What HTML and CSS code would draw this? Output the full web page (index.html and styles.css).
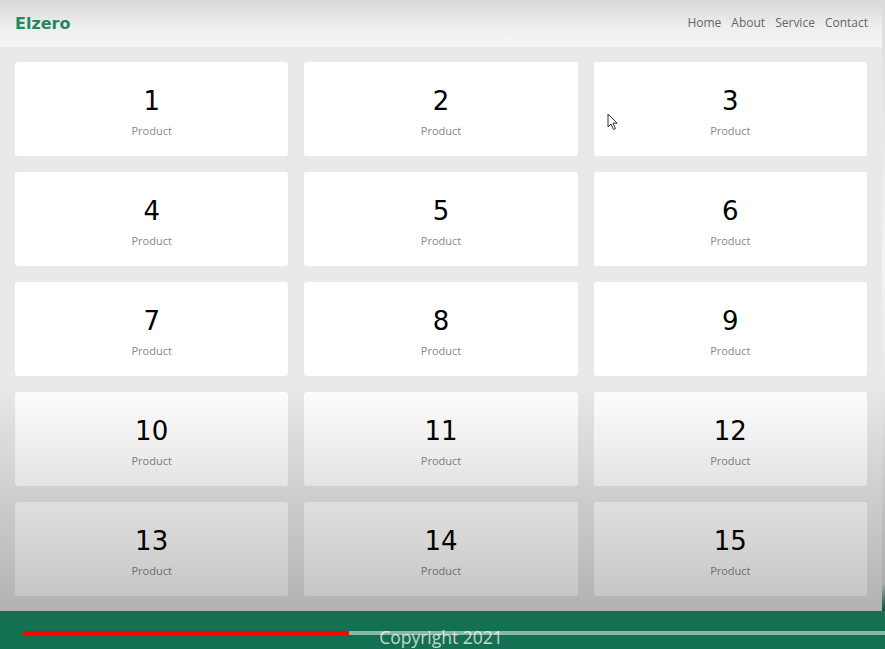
FILE: index.html
```html
<!DOCTYPE html>
<html lang="en">
<head>
<meta charset="utf-8">
<title>Elzero</title>
<link rel="stylesheet" href="styles.css">
</head>
<body>
<div class="frame">
  <div class="page">
    <header class="header">
      <div class="logo">Elzero</div>
      <nav class="nav">
        <a href="#">Home</a>
        <a href="#">About</a>
        <a href="#">Service</a>
        <a href="#">Contact</a>
      </nav>
    </header>
    <main class="products">
      <div class="card"><span class="num">1</span><span class="label">Product</span></div>
      <div class="card"><span class="num">2</span><span class="label">Product</span></div>
      <div class="card"><span class="num">3</span><span class="label">Product</span></div>
      <div class="card"><span class="num">4</span><span class="label">Product</span></div>
      <div class="card"><span class="num">5</span><span class="label">Product</span></div>
      <div class="card"><span class="num">6</span><span class="label">Product</span></div>
      <div class="card"><span class="num">7</span><span class="label">Product</span></div>
      <div class="card"><span class="num">8</span><span class="label">Product</span></div>
      <div class="card"><span class="num">9</span><span class="label">Product</span></div>
      <div class="card"><span class="num">10</span><span class="label">Product</span></div>
      <div class="card"><span class="num">11</span><span class="label">Product</span></div>
      <div class="card"><span class="num">12</span><span class="label">Product</span></div>
      <div class="card"><span class="num">13</span><span class="label">Product</span></div>
      <div class="card"><span class="num">14</span><span class="label">Product</span></div>
      <div class="card"><span class="num">15</span><span class="label">Product</span></div>
    </main>
    <footer class="footer">Copyright 2021</footer>
  </div>
  <div class="edge"></div>

  <div class="shade"></div>
  <div class="progress"><div class="played"></div></div>
  <svg class="cursor" width="12" height="18" viewBox="0 0 12 18">
    <path d="M1 1 L1 14 L4 11 L6.5 16.5 L8.5 15.5 L6 10.2 L10.2 10.2 Z" fill="#fff" stroke="#333" stroke-width="1" stroke-linejoin="round"/>
  </svg>
</div>
</body>
</html>
```

FILE: styles.css
```css
* { box-sizing: border-box; }
html, body { margin: 0; padding: 0; }
body {
  width: 885px;
  height: 649px;
  overflow: hidden;
  background: #f2f2f2;
  font-family: "Open Sans", "Liberation Sans", sans-serif;
}
.frame {
  position: relative;
  display: flex;
  width: 885px;
  height: 649px;
  overflow: hidden;
}
.page {
  width: 882px;
  display: flex;
  flex-direction: column;
  background: #e9e9e9;
}
.edge {
  width: 3px;
  background: linear-gradient(#dcdcdc, #f4f4f4 40%, #d8d8d8 90%, #146f52 94%);
}
.header {
  height: 47px;
  flex: none;
  display: flex;
  align-items: center;
  justify-content: space-between;
  padding: 0 14px 0 15px;
  background: linear-gradient(#d7d7d7, #eeeeee 55%, #f6f6f6);
}
.logo {
  font-family: "DejaVu Sans", Verdana, sans-serif;
  font-weight: bold;
  font-size: 16px;
  color: #1f8a60;
  padding-bottom: 1px;
}
.nav {
  display: flex;
  gap: 10px;
  padding-bottom: 3px;
}
.nav a {
  text-decoration: none;
  color: #666;
  font-size: 12px;
}
.products {
  flex: 1;
  display: grid;
  grid-template-columns: repeat(3, 1fr);
  grid-auto-rows: 94px;
  gap: 16px;
  padding: 15px;
}
.card {
  background: #fff;
  border-radius: 3px;
  display: flex;
  flex-direction: column;
  align-items: center;
  padding-top: 24px;
}
.num {
  font-family: "DejaVu Sans", Verdana, sans-serif;
  font-size: 26px;
  line-height: 30px;
  color: #000;
}
.label {
  margin-top: 8px;
  font-size: 11px;
  line-height: 14px;
  color: #888;
}
.footer {
  height: 38px;
  flex: none;
  background: #137052;
  color: #c9d3ce;
  text-align: center;
  font-size: 17.5px;
  line-height: 20px;
  padding-top: 16px;
}
.shade {
  position: absolute;
  left: 0;
  top: 380px;
  width: 885px;
  height: 231px;
  background: linear-gradient(rgba(0,0,0,0), rgba(0,0,0,0.235));
  pointer-events: none;
}
.progress {
  position: absolute;
  left: 23px;
  top: 631px;
  width: 862px;
  height: 4px;
  background: rgba(255,255,255,0.5);
}
.played {
  width: 326px;
  height: 4px;
  background: #ff0000;
}
.cursor {
  position: absolute;
  left: 607px;
  top: 113px;
}
```
